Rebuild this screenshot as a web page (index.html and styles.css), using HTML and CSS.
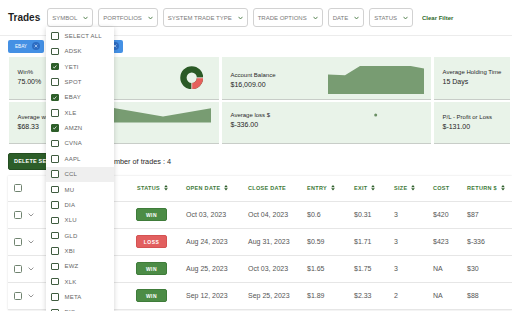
FILE: index.html
```html
<!DOCTYPE html>
<html>
<head>
<meta charset="utf-8">
<link rel="stylesheet" href="styles.css">
</head>
<body>
<div class="page">
  <header class="topbar">
    <h1 class="title">Trades</h1>
    <div class="filters">
      <button class="filter">SYMBOL <svg viewBox="0 0 5 4"><path d="M0.5 0.8 L2.5 3 L4.5 0.8"/></svg></button>
      <button class="filter">PORTFOLIOS <svg viewBox="0 0 5 4"><path d="M0.5 0.8 L2.5 3 L4.5 0.8"/></svg></button>
      <button class="filter">SYSTEM TRADE TYPE <svg viewBox="0 0 5 4"><path d="M0.5 0.8 L2.5 3 L4.5 0.8"/></svg></button>
      <button class="filter">TRADE OPTIONS <svg viewBox="0 0 5 4"><path d="M0.5 0.8 L2.5 3 L4.5 0.8"/></svg></button>
      <button class="filter">DATE <svg viewBox="0 0 5 4"><path d="M0.5 0.8 L2.5 3 L4.5 0.8"/></svg></button>
      <button class="filter">STATUS <svg viewBox="0 0 5 4"><path d="M0.5 0.8 L2.5 3 L4.5 0.8"/></svg></button>
      <a class="clear">Clear Filter</a>
    </div>
  </header>

  <div class="chips">
    <span class="chip">EBAY <span class="chip-x"><svg viewBox="0 0 8 8"><path d="M2.6 2.6 L5.4 5.4 M5.4 2.6 L2.6 5.4"/></svg></span></span>
    <span class="chip">YETI <span class="chip-x"><svg viewBox="0 0 8 8"><path d="M2.6 2.6 L5.4 5.4 M5.4 2.6 L2.6 5.4"/></svg></span></span>
    <span class="chip">AMZN <span class="chip-x"><svg viewBox="0 0 8 8"><path d="M2.6 2.6 L5.4 5.4 M5.4 2.6 L2.6 5.4"/></svg></span></span>
  </div>

  <section class="cards">
    <div class="card">
      <div class="stat"><div class="label">Win%</div><div class="value">75.00%</div></div>
      <svg class="donut" viewBox="0 0 24 24">
        <circle cx="12" cy="12" r="8.5" fill="none" stroke="#2b5a26" stroke-width="6.5"/>
        <circle cx="12" cy="12" r="8.5" fill="none" stroke="#e5605c" stroke-width="6.5" stroke-dasharray="13.35 40.06"/>
        <line x1="17" y1="12" x2="24" y2="12" stroke="#fff" stroke-width="0.7"/>
        <line x1="12" y1="17" x2="12" y2="24" stroke="#fff" stroke-width="0.7"/>
      </svg>
    </div>
    <div class="card">
      <div class="stat stat-low"><div class="label">Account Balance</div><div class="value">$16,009.00</div></div>
      <svg class="area area-balance" viewBox="0 0 96 28"><path d="M0 8.6 L17 9.3 L32 0 L82.7 0 L96 2.6 L96 28 L0 28 Z"/></svg>
    </div>
    <div class="card">
      <div class="stat"><div class="label">Average Holding Time</div><div class="value">15 Days</div></div>
    </div>
    <div class="card">
      <div class="stat"><div class="label">Average win $</div><div class="value">$68.33</div></div>
      <svg class="area area-win" viewBox="0 0 103 16"><path d="M0 0 L55 9.5 L103 1.2 L103 15.5 L0 15.5 Z"/></svg>
    </div>
    <div class="card">
      <div class="stat stat-high"><div class="label">Average loss $</div><div class="value">$-336.00</div></div>
      <svg class="dotchart" viewBox="0 0 96 10"><circle cx="47.7" cy="3" r="1.5"/></svg>
    </div>
    <div class="card">
      <div class="stat"><div class="label">P/L - Profit or Loss</div><div class="value">$-131.00</div></div>
    </div>
  </section>

  <div class="toolbar">
    <button class="btn-delete">DELETE SELECTED</button>
    <span class="count">Number of trades : 4</span>
  </div>

  <div class="table">
    <div class="row head">
      <div class="c-sel"><span class="cb"></span></div>
      <div class="th c-sym">SYMBOL <svg class="sort" viewBox="0 0 4 6"><path d="M0 2.5 L2 0 L4 2.5 Z M0 3.5 L4 3.5 L2 6 Z"/></svg></div>
      <div class="th">STATUS <svg class="sort" viewBox="0 0 4 6"><path d="M0 2.5 L2 0 L4 2.5 Z M0 3.5 L4 3.5 L2 6 Z"/></svg></div>
      <div class="th">OPEN DATE <svg class="sort" viewBox="0 0 4 6"><path d="M0 2.5 L2 0 L4 2.5 Z M0 3.5 L4 3.5 L2 6 Z"/></svg></div>
      <div class="th">CLOSE DATE</div>
      <div class="th">ENTRY <svg class="sort" viewBox="0 0 4 6"><path d="M0 2.5 L2 0 L4 2.5 Z M0 3.5 L4 3.5 L2 6 Z"/></svg></div>
      <div class="th">EXIT <svg class="sort" viewBox="0 0 4 6"><path d="M0 2.5 L2 0 L4 2.5 Z M0 3.5 L4 3.5 L2 6 Z"/></svg></div>
      <div class="th">SIZE <svg class="sort" viewBox="0 0 4 6"><path d="M0 2.5 L2 0 L4 2.5 Z M0 3.5 L4 3.5 L2 6 Z"/></svg></div>
      <div class="th">COST</div>
      <div class="th">RETURN $ <svg class="sort" viewBox="0 0 4 6"><path d="M0 2.5 L2 0 L4 2.5 Z M0 3.5 L4 3.5 L2 6 Z"/></svg></div>
    </div>
    <div class="row">
      <div class="c-sel"><span class="cb"></span><svg class="expand" viewBox="0 0 6 4"><path d="M0.6 0.6 L3 3 L5.4 0.6"/></svg></div>
      <div class="c-sym">AMZN</div>
      <div><span class="badge win">WIN</span></div>
      <div>Oct 03, 2023</div><div>Oct 04, 2023</div><div>$0.6</div><div>$0.31</div><div>3</div><div>$420</div><div>$87</div>
    </div>
    <div class="row">
      <div class="c-sel"><span class="cb"></span><svg class="expand" viewBox="0 0 6 4"><path d="M0.6 0.6 L3 3 L5.4 0.6"/></svg></div>
      <div class="c-sym">EBAY</div>
      <div><span class="badge loss">LOSS</span></div>
      <div>Aug 24, 2023</div><div>Aug 31, 2023</div><div>$0.59</div><div>$1.71</div><div>3</div><div>$423</div><div>$-336</div>
    </div>
    <div class="row">
      <div class="c-sel"><span class="cb"></span><svg class="expand" viewBox="0 0 6 4"><path d="M0.6 0.6 L3 3 L5.4 0.6"/></svg></div>
      <div class="c-sym">YETI</div>
      <div><span class="badge win">WIN</span></div>
      <div>Aug 25, 2023</div><div>Oct 03, 2023</div><div>$1.65</div><div>$1.75</div><div>3</div><div>NA</div><div>$30</div>
    </div>
    <div class="row">
      <div class="c-sel"><span class="cb"></span><svg class="expand" viewBox="0 0 6 4"><path d="M0.6 0.6 L3 3 L5.4 0.6"/></svg></div>
      <div class="c-sym">AMZN</div>
      <div><span class="badge win">WIN</span></div>
      <div>Sep 12, 2023</div><div>Sep 25, 2023</div><div>$1.89</div><div>$2.33</div><div>2</div><div>NA</div><div>$88</div>
    </div>
  </div>

  <div class="dropdown">
    <div class="opt"><span class="box"></span>SELECT ALL</div>
    <div class="opt"><span class="box"></span>ADSK</div>
    <div class="opt"><span class="box on"><svg viewBox="0 0 8 8"><path d="M1.6 4.2 L3.3 5.8 L6.4 2.2"/></svg></span>YETI</div>
    <div class="opt"><span class="box"></span>SPOT</div>
    <div class="opt"><span class="box on"><svg viewBox="0 0 8 8"><path d="M1.6 4.2 L3.3 5.8 L6.4 2.2"/></svg></span>EBAY</div>
    <div class="opt"><span class="box"></span>XLE</div>
    <div class="opt"><span class="box on"><svg viewBox="0 0 8 8"><path d="M1.6 4.2 L3.3 5.8 L6.4 2.2"/></svg></span>AMZN</div>
    <div class="opt"><span class="box"></span>CVNA</div>
    <div class="opt"><span class="box"></span>AAPL</div>
    <div class="opt hl"><span class="box"></span>CCL</div>
    <div class="opt"><span class="box"></span>MU</div>
    <div class="opt"><span class="box"></span>DIA</div>
    <div class="opt"><span class="box"></span>XLU</div>
    <div class="opt"><span class="box"></span>GLD</div>
    <div class="opt"><span class="box"></span>XBI</div>
    <div class="opt"><span class="box"></span>EWZ</div>
    <div class="opt"><span class="box"></span>XLK</div>
    <div class="opt"><span class="box"></span>META</div>
    <div class="opt"><span class="box"></span>DIS</div>
  </div>
</div>
</body>
</html>
```
FILE: styles.css
```css
html, body {
  margin: 0;
  padding: 0;
  width: 512px;
  height: 311px;
  overflow: hidden;
  background: #fff;
}
body {
  font-family: "Liberation Sans", Arial, sans-serif;
  color: #333;
}
.page {
  position: relative;
  width: 512px;
  height: 311px;
  overflow: hidden;
}

/* Top bar */
.topbar {
  display: flex;
  align-items: center;
  gap: 7px;
  height: 19px;
  padding: 8px;
  border-bottom: 1px solid #ececec;
}
.title {
  margin: 0;
  font-size: 10px;
  font-weight: bold;
  color: #1f1f1f;
}
.filters {
  display: flex;
  align-items: center;
  gap: 5px;
}
.filter {
  display: flex;
  align-items: center;
  gap: 6px;
  box-sizing: border-box;
  height: 19px;
  padding: 0 4px;
  border: 1px solid #d2d2d2;
  border-radius: 3px;
  background: #fff;
  font-family: "Liberation Sans", Arial, sans-serif;
  font-size: 6px;
  color: #7a7a7a;
}
.filter svg {
  width: 5px;
  height: 4px;
  fill: none;
  stroke: #4a7a45;
  stroke-width: 0.9;
}
.clear {
  margin-left: 4px;
  font-size: 6px;
  font-weight: bold;
  color: #2f6a2b;
}

/* Chips */
.chips {
  display: flex;
  gap: 4px;
  margin-top: 4px;
  padding: 0 8px;
}
.chip {
  display: flex;
  align-items: center;
  gap: 5px;
  height: 12.5px;
  padding: 0 4px 0 7px;
  background: #4490e4;
  border-radius: 2px;
  color: #fff;
  font-size: 4.6px;
}
.chip-x {
  width: 8px;
  height: 8px;
  border-radius: 50%;
  background: #2d6cc2;
  display: flex;
}
.chip-x svg {
  width: 8px;
  height: 8px;
  fill: none;
  stroke: #b7d3f5;
  stroke-width: 0.8;
}

/* Cards */
.cards {
  display: grid;
  grid-template-columns: 210px 209px 76px;
  grid-template-rows: 42px 41px;
  column-gap: 3px;
  row-gap: 3px;
  margin: 4px 0 0 9px;
}
.card {
  display: flex;
  align-items: center;
  justify-content: space-between;
  padding: 0 8px 0 8.5px;
  background: #e9f3e9;
  box-shadow: 0 1px 0 #c8cdc8;
}
.label {
  font-size: 6px;
  line-height: 7px;
  color: #2a2a2a;
  white-space: nowrap;
}
.value {
  margin-top: 2px;
  font-size: 7px;
  line-height: 8px;
  color: #1e1e1e;
}
.stat-low { margin-top: 6px; }
.stat-high { margin-top: -3px; }
.donut {
  width: 23.5px;
  height: 23.5px;
  margin-right: 8px;
}
.area path { fill: #789c72; }
.area-balance {
  width: 96px;
  height: 28px;
  align-self: flex-end;
  margin: 0 -1px 4.3px 0;
}
.area-win {
  width: 103px;
  height: 16px;
  align-self: flex-start;
  margin-top: 5px;
}
.dotchart {
  width: 96px;
  height: 10px;
  align-self: flex-start;
  margin: 10px -1px 0 0;
}
.dotchart circle { fill: #6a8f64; }

/* Toolbar */
.toolbar {
  display: flex;
  align-items: center;
  gap: 29px;
  margin: 10px 0 0 8px;
}
.btn-delete {
  height: 17px;
  padding: 0 5px;
  border: 1px solid #244d21;
  border-radius: 2px;
  background: #2d5e29;
  color: #fff;
  font-family: "Liberation Sans", Arial, sans-serif;
  font-size: 5.5px;
  font-weight: bold;
  letter-spacing: 0.2px;
}
.count {
  font-size: 7.3px;
  color: #2a2a2a;
}

/* Table */
.table {
  margin: 6px 0 0 8px;
  background: #fff;
  box-shadow: 0 0 2px rgba(0, 0, 0, 0.14);
}
.row {
  display: grid;
  grid-template-columns: 31px 92px 49px 62px 59px 47px 40px 39px 34px 1fr;
  align-items: center;
  box-sizing: border-box;
  height: 27px;
  padding-left: 6px;
  border-bottom: 1px solid #e6e6e6;
  font-size: 7px;
  color: #555;
  white-space: nowrap;
}
.row.head { height: 26px; }
.th {
  display: flex;
  align-items: center;
  gap: 4px;
  font-size: 5.5px;
  font-weight: bold;
  letter-spacing: 0.3px;
  color: #3e7a38;
}
.c-sym { padding-left: 33px; }
.sort {
  width: 4px;
  height: 5.5px;
  fill: #2e5e2a;
}
.c-sel {
  display: flex;
  align-items: center;
  gap: 6px;
}
.cb {
  display: block;
  box-sizing: border-box;
  width: 8px;
  height: 8px;
  border: 1px solid #6f836f;
  border-radius: 1.5px;
  background: #fff;
}
.expand {
  width: 6px;
  height: 4px;
  fill: none;
  stroke: #8a8a8a;
  stroke-width: 0.9;
}
.badge {
  display: flex;
  align-items: center;
  justify-content: center;
  box-sizing: border-box;
  width: 31px;
  height: 13px;
  margin-left: -1px;
  border-radius: 2px;
  color: #fff;
  font-size: 5px;
  font-weight: bold;
  letter-spacing: 0.5px;
}
.win {
  background: #4c8c46;
  border: 1px solid #3f7c3a;
}
.loss {
  background: #e25f5f;
  border: 1px solid #d45252;
}

/* Dropdown menu overlay */
.dropdown {
  position: absolute;
  left: 46px;
  top: 27px;
  bottom: 0;
  width: 68px;
  overflow: hidden;
  padding-top: 1.3px;
  box-sizing: border-box;
  background: #fff;
  box-shadow: 0 1px 5px rgba(0, 0, 0, 0.18);
}
.opt {
  display: flex;
  align-items: center;
  gap: 6px;
  height: 15.37px;
  padding-left: 5px;
  font-size: 6px;
  letter-spacing: 0.2px;
  color: #666;
}
.opt.hl { background: #efefef; }
.box {
  display: block;
  box-sizing: border-box;
  width: 7.5px;
  height: 7.5px;
  border: 1px solid #3f5c3f;
  border-radius: 1px;
  background: #fff;
}
.box.on {
  background: #2d5e29;
  border-color: #2d5e29;
}
.box svg {
  display: block;
  width: 5.5px;
  height: 5.5px;
  fill: none;
  stroke: #fff;
  stroke-width: 1.1;
}
```
